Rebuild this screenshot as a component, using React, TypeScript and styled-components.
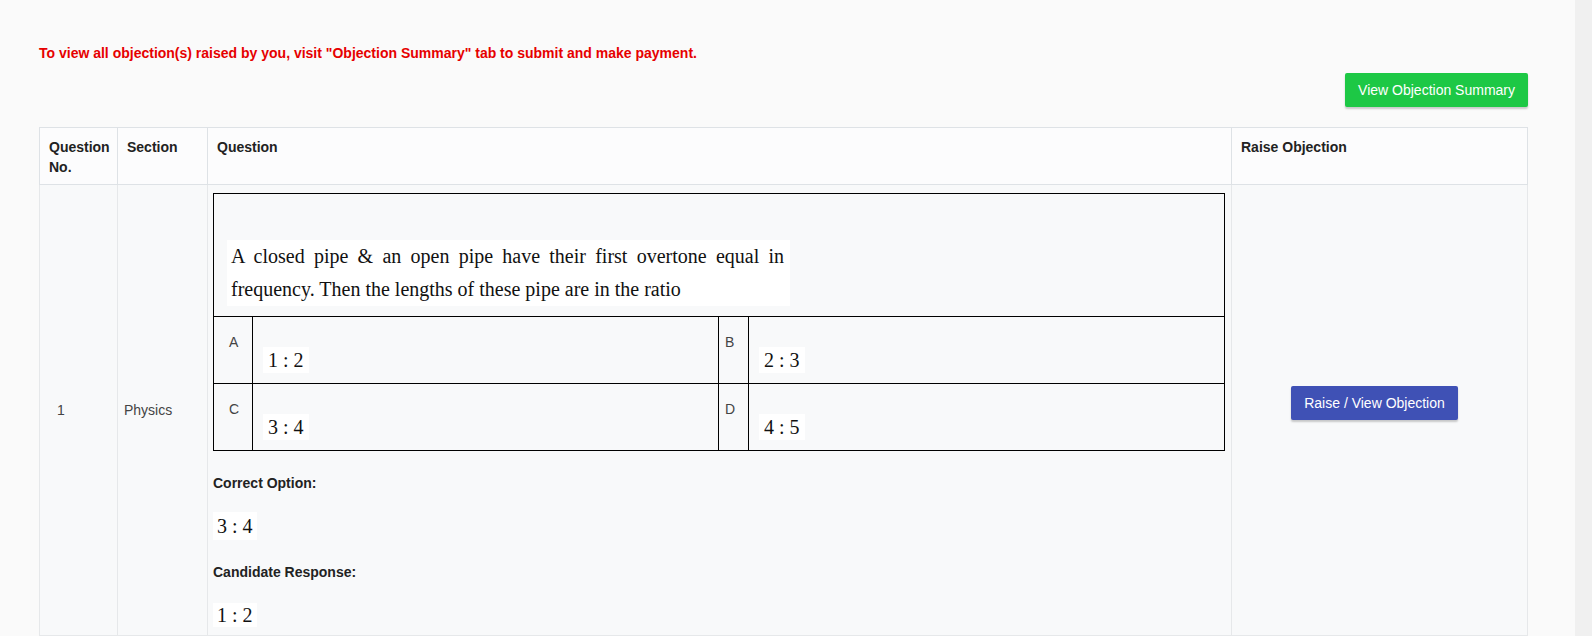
import styled, { createGlobalStyle } from 'styled-components';

const GlobalStyle = createGlobalStyle`
  html, body {
    margin: 0;
    padding: 0;
    background: #fafafa;
  }
  * {
    box-sizing: border-box;
  }
`;

const Page = styled.div`
  display: flex;
  min-height: 100vh;
  font-family: 'Liberation Sans', Arial, sans-serif;
`;

const Main = styled.main`
  flex: 1;
  padding: 43px 47px 0 39px;
  overflow: hidden;
`;

const Gutter = styled.div`
  width: 17px;
  flex-shrink: 0;
  background: #f0f0f0;
`;

const Notice = styled.p`
  margin: 0;
  font-size: 14px;
  line-height: 20px;
  font-weight: 700;
  color: #e60000;
`;

const Actions = styled.div`
  display: flex;
  justify-content: flex-end;
  margin-top: 10px;
`;

const Button = styled.button<{ $tone: 'green' | 'indigo' }>`
  height: 34px;
  padding: 0 13px;
  border: none;
  border-radius: 2px;
  font-family: 'Liberation Sans', Arial, sans-serif;
  font-size: 14px;
  color: #fff;
  cursor: pointer;
  background: ${(p) => (p.$tone === 'green' ? '#1dc845' : '#3f51b5')};
  box-shadow: 0 2px 2px rgba(0, 0, 0, 0.2);
`;

const RaiseButton = styled(Button)`
  margin: 0 10px 14px 0;
`;

const Grid = styled.table`
  width: 100%;
  margin-top: 20px;
  border-collapse: collapse;
  table-layout: fixed;
  background: #f8f9fa;
`;

const HeadCell = styled.th`
  border: 1px solid #dee2e6;
  padding: 9px 9px 7px;
  text-align: left;
  vertical-align: top;
  font-size: 14px;
  line-height: 20px;
  font-weight: 700;
  color: #222;
  background: #fcfcfd;
`;

const BodyCell = styled.td<{ $pad?: number; $center?: boolean }>`
  border: 1px solid #e6e8ea;
  padding: 0 0 0 ${(p) => p.$pad ?? 6}px;
  vertical-align: middle;
  text-align: ${(p) => (p.$center ? 'center' : 'left')};
  font-size: 14px;
  line-height: 20px;
  color: #444;
`;

const QuestionCell = styled.td`
  border: 1px solid #e6e8ea;
  padding: 8px 6px 8px 5px;
  vertical-align: top;
`;

const QuestionBox = styled.table`
  width: 100%;
  border-collapse: collapse;
  table-layout: fixed;
  border: 1px solid #000;
`;

const StemCell = styled.td`
  border: 1px solid #000;
  padding: 46px 12px 10px 13px;
`;

const StemText = styled.div`
  display: inline-block;
  width: 563px;
  padding: 0 6px 0 4px;
  background: #fff;
  font-family: 'Liberation Serif', 'Times New Roman', serif;
  font-size: 20px;
  line-height: 33px;
  color: #111;
`;

const StemLine = styled.span<{ $justify?: boolean }>`
  display: block;
  text-align: ${(p) => (p.$justify ? 'justify' : 'left')};
  text-align-last: ${(p) => (p.$justify ? 'justify' : 'auto')};
`;

const LetterCell = styled.td<{ $pad: number }>`
  border: 1px solid #000;
  padding: 17px 0 0 ${(p) => p.$pad}px;
  vertical-align: top;
  text-align: left;
  font-size: 14px;
  line-height: 16px;
  color: #444;
`;

const ValueCell = styled.td`
  border: 1px solid #000;
  padding: 30px 10px 10px;
  vertical-align: top;
`;

const Math = styled.span<{ $h?: number }>`
  display: inline-block;
  padding: 0 5px;
  background: #fff;
  font-family: 'Liberation Serif', 'Times New Roman', serif;
  font-size: 20px;
  line-height: ${(p) => p.$h ?? 26}px;
  color: #111;
`;

const Answers = styled.div`
  display: flex;
  flex-direction: column;
  align-items: flex-start;
  margin-top: 22px;
`;

const Label = styled.div<{ $gap: number }>`
  font-size: 14px;
  line-height: 20px;
  font-weight: 700;
  color: #222;
  margin-bottom: ${(p) => p.$gap}px;
`;

const AnswerValue = styled(Math)`
  padding: 0 4px;
  margin-bottom: 22px;
  &:last-child {
    margin-bottom: 0;
  }
`;

const options = [
  [
    { key: 'A', value: '1 : 2', pad: 15 },
    { key: 'B', value: '2 : 3', pad: 6 },
  ],
  [
    { key: 'C', value: '3 : 4', pad: 15 },
    { key: 'D', value: '4 : 5', pad: 6 },
  ],
];

function App() {
  return (
    <Page>
      <GlobalStyle />
      <Main>
        <Notice>
          To view all objection(s) raised by you, visit "Objection Summary" tab to submit and make
          payment.
        </Notice>
        <Actions>
          <Button $tone="green">View Objection Summary</Button>
        </Actions>
        <Grid>
          <colgroup>
            <col style={{ width: 78 }} />
            <col style={{ width: 90 }} />
            <col style={{ width: 1024 }} />
            <col />
          </colgroup>
          <thead>
            <tr>
              <HeadCell>Question No.</HeadCell>
              <HeadCell>Section</HeadCell>
              <HeadCell>Question</HeadCell>
              <HeadCell>Raise Objection</HeadCell>
            </tr>
          </thead>
          <tbody>
            <tr>
              <BodyCell $pad={17}>1</BodyCell>
              <BodyCell $pad={6}>Physics</BodyCell>
              <QuestionCell>
                <QuestionBox>
                  <colgroup>
                    <col style={{ width: 39 }} />
                    <col style={{ width: 466 }} />
                    <col style={{ width: 30 }} />
                    <col />
                  </colgroup>
                  <tbody>
                    <tr>
                      <StemCell colSpan={4}>
                        <StemText>
                          <StemLine $justify>
                            A closed pipe &amp; an open pipe have their first overtone equal in
                          </StemLine>
                          <StemLine>frequency. Then the lengths of these pipe are in the ratio</StemLine>
                        </StemText>
                      </StemCell>
                    </tr>
                    {options.map((row) => (
                      <tr key={row[0].key}>
                        {row.map((opt) => [
                          <LetterCell key={opt.key} $pad={opt.pad}>
                            {opt.key}
                          </LetterCell>,
                          <ValueCell key={opt.key + '-v'}>
                            <Math>{opt.value}</Math>
                          </ValueCell>,
                        ])}
                      </tr>
                    ))}
                  </tbody>
                </QuestionBox>
                <Answers>
                  <Label $gap={19}>Correct Option:</Label>
                  <AnswerValue $h={28}>3 : 4</AnswerValue>
                  <Label $gap={21}>Candidate Response:</Label>
                  <AnswerValue $h={24}>1 : 2</AnswerValue>
                </Answers>
              </QuestionCell>
              <BodyCell $center $pad={0}>
                <RaiseButton $tone="indigo">Raise / View Objection</RaiseButton>
              </BodyCell>
            </tr>
          </tbody>
        </Grid>
      </Main>
      <Gutter />
    </Page>
  );
}

export default App;
